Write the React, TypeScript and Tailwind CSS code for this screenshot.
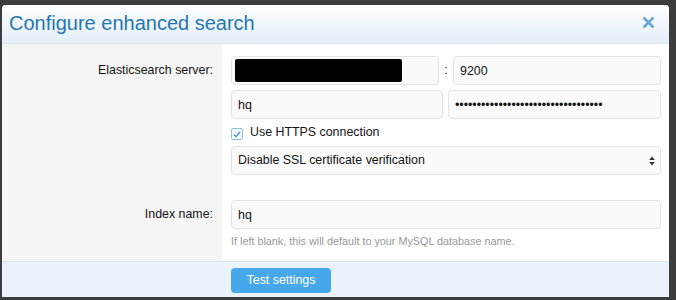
import React from 'react';

const fieldClass =
  'h-[29px] min-w-0 rounded-[4px] border border-[#e3e3e3] bg-[#fafafa] px-[6px] text-[12.4px] text-[#141414] outline-none';

const CloseIcon: React.FC = () => (
  <svg width="13" height="13" viewBox="0 0 13 13" className="text-[#6ba6d9]">
    <path d="M1.5 1.5l10 10M11.5 1.5l-10 10" stroke="currentColor" strokeWidth="2.6" strokeLinecap="butt" />
  </svg>
);

const SelectArrows: React.FC = () => (
  <svg width="6" height="10" viewBox="0 0 6 10" className="text-[#333]">
    <path d="M3 0.5L5.8 4H0.2z M3 9.5L0.2 6h5.6z" fill="currentColor" />
  </svg>
);

const App: React.FC = () => {
  return (
    <div className="h-[300px] w-[676px] overflow-hidden bg-[#3d3d3d] pt-[5px] pl-[2px] font-['Liberation_Sans',Arial,sans-serif]">
      <div className="w-[667px] overflow-hidden rounded-t-[4px] bg-white">
        {/* header */}
        <div className="flex h-[39px] items-start justify-between border-b border-[#dae7f2] bg-gradient-to-b from-[#fdfeff] to-[#e4eff9] pl-[7px] pr-[14px] pt-[6px]">
          <h1 className="text-[20px] leading-[24px] text-[#2577b1]">Configure enhanced search</h1>
          <button className="mt-[5px]">
            <CloseIcon />
          </button>
        </div>

        {/* body */}
        <div className="grid grid-cols-[220px_1fr]">
          <div className="bg-[#f5f5f5] pr-[9px] pt-[12px]">
            <div className="flex h-[29px] items-center justify-end text-[12.4px] text-[#141414]">Elasticsearch server:</div>
          </div>
          <div className="pl-[9px] pr-[8px] pt-[12px] pb-[25px]">
            <div className="flex items-center">
              <div className="flex h-[29px] w-[208px] items-center rounded-[4px] border border-[#e3e3e3] bg-[#fafafa] pl-[3px]">
                <div className="h-[23px] w-[167px] rounded-[2px] bg-black"></div>
              </div>
              <span className="w-[14px] text-center text-[12.4px] text-[#141414]">:</span>
              <input readOnly value="9200" className={fieldClass + ' flex-1'} />
            </div>
            <div className="mt-[5px] flex gap-[5px]">
              <input readOnly value="hq" className={fieldClass + ' w-[212px] flex-none'} />
              <input readOnly type="password" value="abcdefghijklmnopqrstuvwxyz01234567" className={fieldClass + ' flex-1'} />
            </div>
            <label className="mt-[4px] flex h-[19px] items-center gap-[7px] text-[12.4px] text-[#141414]">
              <span className="mt-[3px] flex h-[12px] w-[12px] items-center justify-center rounded-[2px] border border-[#93c2e9] bg-[#f2f8fd]">
                <svg width="8" height="7" viewBox="0 0 8 7">
                  <path d="M1 3.6l2 2 4-4.6" fill="none" stroke="#3f8bd0" strokeWidth="1.3" />
                </svg>
              </span>
              Use HTTPS connection
            </label>
            <div className={fieldClass + ' mt-[4px] flex items-center justify-between pr-[5px]'}>
              <span>Disable SSL certificate verification</span>
              <SelectArrows />
            </div>
          </div>

          <div className="bg-[#f5f5f5] pr-[9px]">
            <div className="flex h-[29px] items-center justify-end text-[12.4px] text-[#141414]">Index name:</div>
          </div>
          <div className="flex flex-col pl-[9px] pr-[8px] pb-[13px]">
            <input readOnly value="hq" className={fieldClass + ' w-full'} />
            <p className="mt-[5px] text-[10.8px] leading-[14px] text-[#999]">
              If left blank, this will default to your MySQL database name.
            </p>
          </div>
        </div>

        {/* footer */}
        <div className="grid grid-cols-[220px_1fr] border-t border-[#d9e5ef] bg-[#eaf3fb]">
          <div></div>
          <div className="pl-[9px] pt-[5px] pb-[4px]">
            <button className="h-[25px] w-[100px] rounded-[4px] bg-[#47a7eb] text-[12.4px] text-white">
              Test settings
            </button>
          </div>
        </div>
      </div>
    </div>
  );
};

export default App;
